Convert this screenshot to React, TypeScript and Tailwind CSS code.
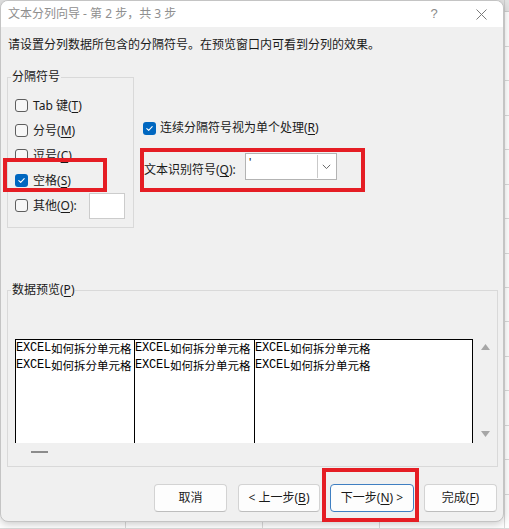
import React from 'react';

const font = "font-['Noto_Sans','Noto_Sans_CJK_SC',sans-serif]";

const sheetCols = [126, 137, 117, 125, 40];
const sheetRows = 15;

function Sheet() {
  return (
    <div className="flex flex-col w-full h-full bg-white">
      <div className="flex h-[13px] bg-[#e4e4e4] border-b border-[#cfcfcf]">
        {sheetCols.map((w, i) => (
          <div key={i} className="shrink-0 h-full border-r border-[#cfcfcf]" style={{ width: w }} />
        ))}
      </div>
      {Array.from({ length: sheetRows }).map((_, r) => (
        <div key={r} className="flex h-[36px] border-b border-[#dadada]">
          {sheetCols.map((w, i) => (
            <div key={i} className="shrink-0 h-full border-r border-[#dadada]" style={{ width: w }} />
          ))}
        </div>
      ))}
    </div>
  );
}

function Check({ checked }: { checked?: boolean }) {
  if (checked) {
    return (
      <span className="w-[13px] h-[13px] shrink-0 rounded-[3px] bg-[#0067c0] flex items-center justify-center">
        <svg width="9" height="9" viewBox="0 0 9 9" fill="none">
          <path d="M1.8 4.6 L3.7 6.4 L7.2 2.6" stroke="white" strokeWidth="1.1" strokeLinecap="round" strokeLinejoin="round" />
        </svg>
      </span>
    );
  }
  return <span className="w-[13px] h-[13px] shrink-0 rounded-[3px] border border-[#5e5e5e] bg-[#f7f7f7]" />;
}

function Key({ k }: { k: string }) {
  return <u className="underline-offset-[2px] decoration-[1px]">{k}</u>;
}

const delimiters = [
  { label: 'Tab 键', key: 'T' },
  { label: '分号', key: 'M' },
  { label: '逗号', key: 'C' },
  { label: '空格', key: 'S', checked: true },
];

function PreviewText() {
  return (
    <div className="whitespace-nowrap">
      {[0, 1].map((i) => (
        <div key={i} className="h-[17px] flex items-center leading-[17px]">
          <span className="font-['Liberation_Mono',monospace] text-[12px] tracking-[-0.2px]">EXCEL</span>
          <span className="font-['Noto_Sans_CJK_SC',sans-serif] text-[11.5px]">如何拆分单元格</span>
        </div>
      ))}
    </div>
  );
}

function Btn({ children, w, primary }: { children: React.ReactNode; w: string; primary?: boolean }) {
  return (
    <button
      className={
        'h-[28px] rounded-[4px] bg-[#fdfdfd] flex items-center justify-center leading-[14px] text-[12px] ' +
        w +
        (primary ? ' border border-[#3f7fc2]' : ' border border-[#d3d3d3] border-b-[#bdbdbd]')
      }
    >
      {children}
    </button>
  );
}

export default function App() {
  return (
    <div className={`relative w-[509px] h-[529px] overflow-hidden text-[12px] text-[#1a1a1a] ${font}`}>
      <Sheet />

      {/* dialog window */}
      <div className="absolute left-0 top-0 w-[504px] h-[522px] rounded-lg border border-[#c4c4c4] bg-[#f0f0f0] shadow-[0_2px_8px_rgba(0,0,0,0.22)] overflow-hidden flex flex-col">
        {/* title bar */}
        <div className="h-[26px] shrink-0 bg-white flex items-center pl-[7px] text-[#8f8f8f] leading-[14px]">
          <span>文本分列向导 - 第 2 步，共 3 步</span>
          <span className="ml-auto w-[10px] text-center text-[#8a8a8a] font-['Liberation_Sans',sans-serif] text-[13px]">?</span>
          <span className="ml-[37px] mr-[16px] flex items-center">
            <svg width="11" height="11" viewBox="0 0 11 11">
              <path d="M0.5 0.5 L10.5 10.5 M10.5 0.5 L0.5 10.5" stroke="#7a7a7a" strokeWidth="1" />
            </svg>
          </span>
        </div>

        <div className="mt-[11px] pl-[7px] leading-[14px]">请设置分列数据所包含的分隔符号。在预览窗口内可看到分列的效果。</div>

        {/* delimiters */}
        <div className="mt-[18px] pl-[6px] flex">
          <fieldset className="w-[127px] h-[158px] border border-[#d9d9d9]">
            <legend className="ml-[3px] px-[1px] leading-[14px]">分隔符号</legend>
            <div className="pt-[9px]">
              {delimiters.map((d) => (
                <div key={d.key} className="h-[25px] pl-[7px] flex items-center gap-[5px] leading-[14px]">
                  <Check checked={d.checked} />
                  <span>
                    {d.label}(<Key k={d.key} />)
                  </span>
                </div>
              ))}
              <div className="h-[25px] pl-[7px] pr-[8px] flex items-center gap-[5px] leading-[14px]">
                <Check />
                <span>
                  其他(<Key k="O" />):
                </span>
                <span className="ml-auto w-[36px] h-[26px] bg-white border border-[#cccccc]" />
              </div>
            </div>
          </fieldset>

          <div className="ml-[9px] flex flex-col">
            <div className="mt-[48px] h-[20px] flex items-center gap-[4px] leading-[14px]">
              <Check checked />
              <span>
                连续分隔符号视为单个处理(<Key k="R" />)
              </span>
            </div>
            <div className="mt-[15px] ml-[1px] flex items-start">
              <span className="w-[101px] pt-[10px] leading-[14px]">
                文本识别符号(<Key k="Q" />):
              </span>
              <div className="w-[92px] h-[27px] bg-white border border-[#b3b3b3] flex">
                <span className="flex-1 pl-[3px] leading-[14px] pt-[2px] font-['Liberation_Sans',sans-serif]">'</span>
                <span className="w-[18px] mr-[1px] my-[1px] border-l border-[#c9c9c9] flex items-center justify-center">
                  <svg width="9" height="6" viewBox="0 0 9 6">
                    <path d="M0.8 0.8 L4.5 4.6 L8.2 0.8" fill="none" stroke="#6a6a6a" strokeWidth="1" />
                  </svg>
                </span>
              </div>
            </div>
          </div>
        </div>

        {/* data preview */}
        <fieldset className="mt-[55px] ml-[6px] w-[491px] h-[184px] border border-[#d9d9d9]">
          <legend className="ml-[3px] px-[1px] leading-[14px]">
            数据预览(<Key k="P" />)
          </legend>
          <div className="mt-[42px] pl-[7px] flex">
            <div className="w-[458px] h-[104px] bg-white border border-b-0 border-black flex overflow-hidden text-black">
              <div className="w-[119px] shrink-0 border-r border-black">
                <PreviewText />
              </div>
              <div className="w-[120px] shrink-0 border-r border-black">
                <PreviewText />
              </div>
              <div className="flex-1">
                <PreviewText />
              </div>
            </div>
            <div className="w-[24px] h-[104px] flex flex-col items-center justify-between pt-[5px] pb-[6px]">
              <svg width="9" height="6" viewBox="0 0 9 6">
                <path d="M4.5 0 L9 6 L0 6 Z" fill="#a6a6a6" />
              </svg>
              <svg width="9" height="6" viewBox="0 0 9 6">
                <path d="M0 0 L9 0 L4.5 6 Z" fill="#a6a6a6" />
              </svg>
            </div>
          </div>
          <div className="mt-[8px] ml-[23px] w-[17px] h-[2px] bg-[#8c8c8c]" />
        </fieldset>

        {/* buttons */}
        <div className="mt-[17px] pr-[6px] flex justify-end">
          <Btn w="w-[73px]">取消</Btn>
          <Btn w="w-[82px] ml-[11px]">
            &lt; 上一步(<Key k="B" />)
          </Btn>
          <Btn w="w-[84px] ml-[10px]" primary>
            下一步(<Key k="N" />) &gt;
          </Btn>
          <Btn w="w-[73px] ml-[10px]">
            完成(<Key k="F" />)
          </Btn>
        </div>
      </div>

      {/* red highlight boxes */}
      <div className="absolute left-[3px] top-[158px] w-[104px] h-[34px] border-[4px] border-[#e51d24]" />
      <div className="absolute left-[140px] top-[148px] w-[225px] h-[44px] border-[4px] border-[#e51d24]" />
      <div className="absolute left-[322px] top-[468px] w-[97px] h-[54px] border-[4px] border-[#e51d24]" />
    </div>
  );
}
